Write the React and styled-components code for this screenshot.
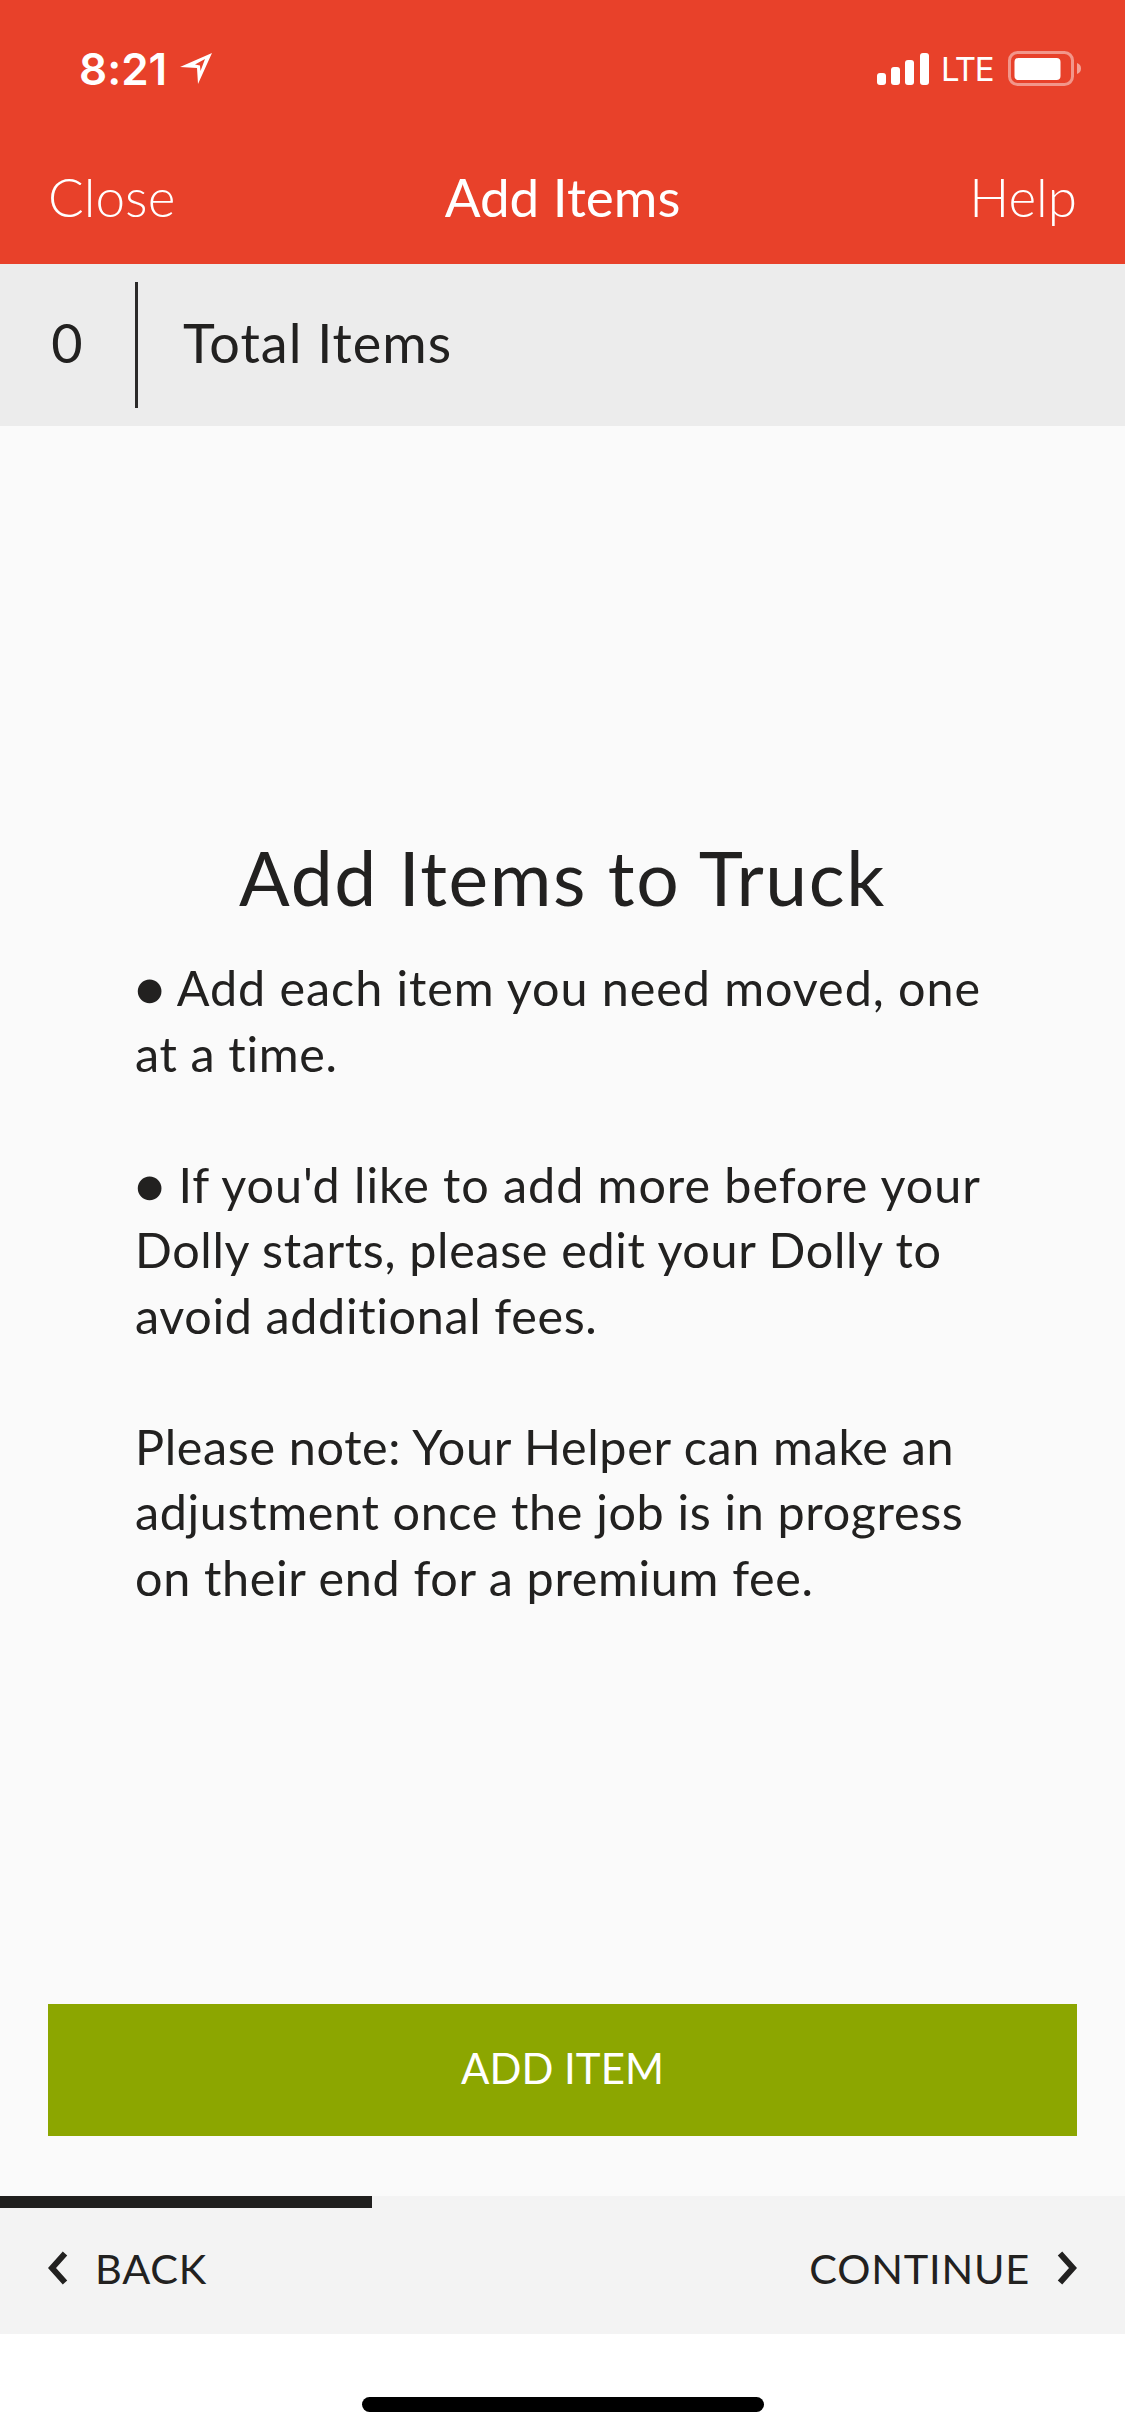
import React from "react"
import styled, { createGlobalStyle } from "styled-components"

const GlobalStyle = createGlobalStyle`
  html, body {
    margin: 0;
    padding: 0;
    background: #fff;
  }
  body {
    font-family: "Lato", "Open Sans", sans-serif;
    font-variant-ligatures: none;
  }
`

const Screen = styled.div`
  width: 1125px;
  height: 2436px;
  display: flex;
  flex-direction: column;
  overflow: hidden;
  color: #222120;
`

const Header = styled.header`
  height: 264px;
  background: #e8412a;
  color: #fff;
  display: flex;
  flex-direction: column;
`

const StatusBar = styled.div`
  height: 132px;
  padding: 6px 43px 0 79px;
  box-sizing: border-box;
  display: flex;
  align-items: center;
  justify-content: space-between;
`

const Clock = styled.div`
  display: flex;
  align-items: center;
  gap: 13px;
  font-family: "Inter", "Liberation Sans", sans-serif;
  font-size: 44px;
  font-weight: 600;
`

const StatusIcons = styled.div`
  display: flex;
  align-items: center;
  gap: 12px;
`

const Carrier = styled.span`
  margin-right: 3px;
  font-family: "Inter", "Liberation Sans", sans-serif;
  font-size: 33px;
  font-weight: 400;
  letter-spacing: -1.5px;
`

const NavBar = styled.nav`
  height: 132px;
  padding: 0 48px 3px;
  box-sizing: border-box;
  display: grid;
  grid-template-columns: 1fr auto 1fr;
  align-items: center;
  font-size: 53px;
`

const NavTitle = styled.h1`
  margin: 0;
  font-size: 53px;
  font-weight: 400;
`

const NavLink = styled.span`
  font-weight: 300;
  text-align: ${(p) => (p.$end ? "right" : "left")};
`

const TotalsBar = styled.div`
  height: 162px;
  background: #ececec;
  display: flex;
  align-items: center;
  font-size: 54px;
  letter-spacing: 1px;
`

const Count = styled.div`
  width: 138px;
  height: 126px;
  box-sizing: border-box;
  padding-bottom: 5px;
  display: flex;
  align-items: center;
  justify-content: center;
  border-right: 3px solid #2b2a29;
  margin-right: 45px;
`

const TotalsLabel = styled.span`
  padding-bottom: 5px;
`

const Main = styled.main`
  flex: 1;
  background: #fafafa;
  display: flex;
  flex-direction: column;
  padding: 0 48px;
`

const Intro = styled.section`
  flex: 1;
  padding: 403px 87px 0;
`

const IntroTitle = styled.h2`
  margin: 0 -40px 30px;
  font-size: 75px;
  font-weight: 400;
  line-height: 96px;
  letter-spacing: 1.6px;
  text-align: center;
`

const IntroText = styled.p`
  margin: 0 -40px 65.5px 0;
  font-size: 48.5px;
  line-height: 65.5px;
  letter-spacing: 0.65px;

  &::first-line {
    letter-spacing: ${(p) => (p.$bullet ? "0.93px" : "0.65px")};
  }
`

const PrimaryButton = styled.button`
  height: 132px;
  margin-bottom: 60px;
  padding: 0 0 5px;
  border: 0;
  background: #8ca600;
  color: #fff;
  font-family: inherit;
  font-size: 42px;
`

const Footer = styled.footer`
  height: 138px;
  background: #f3f3f3;
  display: flex;
  flex-direction: column;
`

const Progress = styled.div`
  height: 12px;
  background: #201f1e;
`

const FooterNav = styled.div`
  flex: 1;
  padding: 0 48px 6px;
  display: flex;
  align-items: center;
  justify-content: space-between;
  font-size: 41.5px;
  letter-spacing: 0.8px;
`

const StepLink = styled.span`
  display: flex;
  align-items: center;
  gap: 27px;
`

const HomeArea = styled.div`
  height: 102px;
  background: #fff;
  display: flex;
  justify-content: center;
  padding-top: 63px;
  box-sizing: border-box;
`

const HomeIndicator = styled.div`
  width: 402px;
  height: 15px;
  border-radius: 8px;
  background: #000;
`

const LocationArrow = () => (
  <svg width="32" height="32" viewBox="0 0 32 32">
    <path
      fillRule="evenodd"
      fill="#fff"
      d="M32 0 L0 14 L17 15 L18 31 Z M25 6 L15 11.5 L20 12.5 L20.5 18 Z"
    />
  </svg>
)

const Signal = () => (
  <svg width="52" height="32" viewBox="0 0 52 32" fill="#fff">
    <rect x="0" y="20" width="9" height="12" rx="3" />
    <rect x="14" y="14" width="9" height="18" rx="3" />
    <rect x="28" y="7" width="9" height="25" rx="3" />
    <rect x="43" y="0" width="9" height="32" rx="3" />
  </svg>
)

const Battery = () => (
  <svg width="74" height="36" viewBox="0 0 74 36">
    <rect x="1.5" y="1.5" width="63" height="32" rx="8" fill="none" stroke="#fff" strokeOpacity="0.45" strokeWidth="3" />
    <rect x="6.5" y="7" width="46" height="22" rx="4" fill="#fff" />
    <path d="M69 12 C72 13 73 15 73 17.5 C73 20 72 22 69 23 Z" fill="#fff" fillOpacity="0.5" />
  </svg>
)

const Chevron = ({ right }) => (
  <svg width="20" height="36" viewBox="0 0 20 36">
    <path
      d={right ? "M3 3.5 L16 18 L3 32.5" : "M17 3.5 L4 18 L17 32.5"}
      fill="none"
      stroke="#222120"
      strokeWidth="6"
    />
  </svg>
)

const App = () => {
  return (
    <Screen>
      <GlobalStyle />
      <Header>
        <StatusBar>
          <Clock>
            8:21
            <LocationArrow />
          </Clock>
          <StatusIcons>
            <Signal />
            <Carrier>LTE</Carrier>
            <Battery />
          </StatusIcons>
        </StatusBar>
        <NavBar>
          <NavLink>Close</NavLink>
          <NavTitle>Add Items</NavTitle>
          <NavLink $end>Help</NavLink>
        </NavBar>
      </Header>
      <TotalsBar>
        <Count>0</Count>
        <TotalsLabel>Total Items</TotalsLabel>
      </TotalsBar>
      <Main>
        <Intro>
          <IntroTitle>Add Items to Truck</IntroTitle>
          <IntroText $bullet>
            ● Add each item you need moved, one
            <br />
            at a time.
          </IntroText>
          <IntroText $bullet>
            ● If you'd like to add more before your
            <br />
            Dolly starts, please edit your Dolly to
            <br />
            avoid additional fees.
          </IntroText>
          <IntroText>
            Please note: Your Helper can make an
            <br />
            adjustment once the job is in progress
            <br />
            on their end for a premium fee.
          </IntroText>
        </Intro>
        <PrimaryButton>ADD ITEM</PrimaryButton>
      </Main>
      <Footer>
        <Progress style={{ width: `${(372 / 1125) * 100}%` }} />
        <FooterNav>
          <StepLink>
            <Chevron />
            BACK
          </StepLink>
          <StepLink>
            CONTINUE
            <Chevron right />
          </StepLink>
        </FooterNav>
      </Footer>
      <HomeArea>
        <HomeIndicator />
      </HomeArea>
    </Screen>
  )
}

export default App
